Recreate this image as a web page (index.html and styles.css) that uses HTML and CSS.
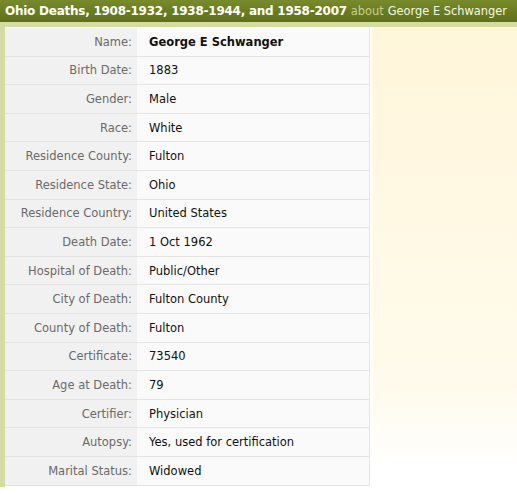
FILE: index.html
```html
<!DOCTYPE html>
<html>
<head>
<meta charset="utf-8">
<link rel="stylesheet" href="styles.css">
</head>
<body>
<div class="page">
  <div class="header">
    <span class="title">Ohio Deaths, 1908-1932, 1938-1944, and 1958-2007</span>
    <span class="about">about</span>
    <span class="person">George E Schwanger</span>
  </div>
  <div class="body">
    <div class="records">
      <div class="row"><div class="label">Name:</div><div class="value bold">George E Schwanger</div></div>
      <div class="row"><div class="label">Birth Date:</div><div class="value">1883</div></div>
      <div class="row"><div class="label">Gender:</div><div class="value">Male</div></div>
      <div class="row"><div class="label">Race:</div><div class="value">White</div></div>
      <div class="row"><div class="label">Residence County:</div><div class="value">Fulton</div></div>
      <div class="row"><div class="label">Residence State:</div><div class="value">Ohio</div></div>
      <div class="row"><div class="label">Residence Country:</div><div class="value">United States</div></div>
      <div class="row"><div class="label">Death Date:</div><div class="value">1 Oct 1962</div></div>
      <div class="row"><div class="label">Hospital of Death:</div><div class="value">Public/Other</div></div>
      <div class="row"><div class="label">City of Death:</div><div class="value">Fulton County</div></div>
      <div class="row"><div class="label">County of Death:</div><div class="value">Fulton</div></div>
      <div class="row"><div class="label">Certificate:</div><div class="value">73540</div></div>
      <div class="row"><div class="label">Age at Death:</div><div class="value">79</div></div>
      <div class="row"><div class="label">Certifier:</div><div class="value">Physician</div></div>
      <div class="row"><div class="label">Autopsy:</div><div class="value">Yes, used for certification</div></div>
      <div class="row"><div class="label">Marital Status:</div><div class="value">Widowed</div></div>
    </div>
    <div class="side"></div>
  </div>
</div>
</body>
</html>
```

FILE: styles.css
```css
html, body {
  margin: 0;
  padding: 0;
  background: #ffffff;
}
body {
  font-family: "DejaVu Sans", Verdana, sans-serif;
  font-size: 11.5px;
}
.page {
  width: 517px;
}
.header {
  height: 22px;
  background: linear-gradient(#778a2c, #5f7017);
  color: #ffffff;
  display: flex;
  align-items: center;
  padding-left: 5px;
  white-space: nowrap;
  font-size: 11.4px;
  box-sizing: border-box;
}
.title {
  font-weight: bold;
  font-size: 12px;
  letter-spacing: -0.25px;
}
.about {
  color: #c5cf8e;
  margin-left: 4px;
}
.person {
  color: #f4f6e6;
  margin-left: 4px;
}
.body {
  display: flex;
  border-top: 5px solid #d4dba4;
  border-left: 5px solid #d4dba4;
  height: 465px;
  box-sizing: border-box;
  background: #ffffff;
}
.records {
  width: 364px;
  flex: none;
  border-right: 1px solid #e6e6e6;
  align-self: flex-start;
  background: #fafafa;
  padding-top: 1px;
}
.row {
  display: flex;
  height: 28.6px;
  box-sizing: border-box;
  border-bottom: 1px solid #e4e4e4;
  align-items: center;
}
.label {
  width: 132px;
  flex: none;
  align-self: stretch;
  display: flex;
  align-items: center;
  justify-content: flex-end;
  padding-right: 5px;
  box-sizing: border-box;
  background: #f1f1f1;
  color: #6a6a6a;
}
.value {
  padding-left: 12px;
  color: #111111;
}
.bold {
  font-weight: bold;
}
.side {
  flex: 1;
  margin-left: 2px;
  background: linear-gradient(#fff6da 0%, #fffaec 80%, #ffffff 100%);
  height: 445px;
}
```
